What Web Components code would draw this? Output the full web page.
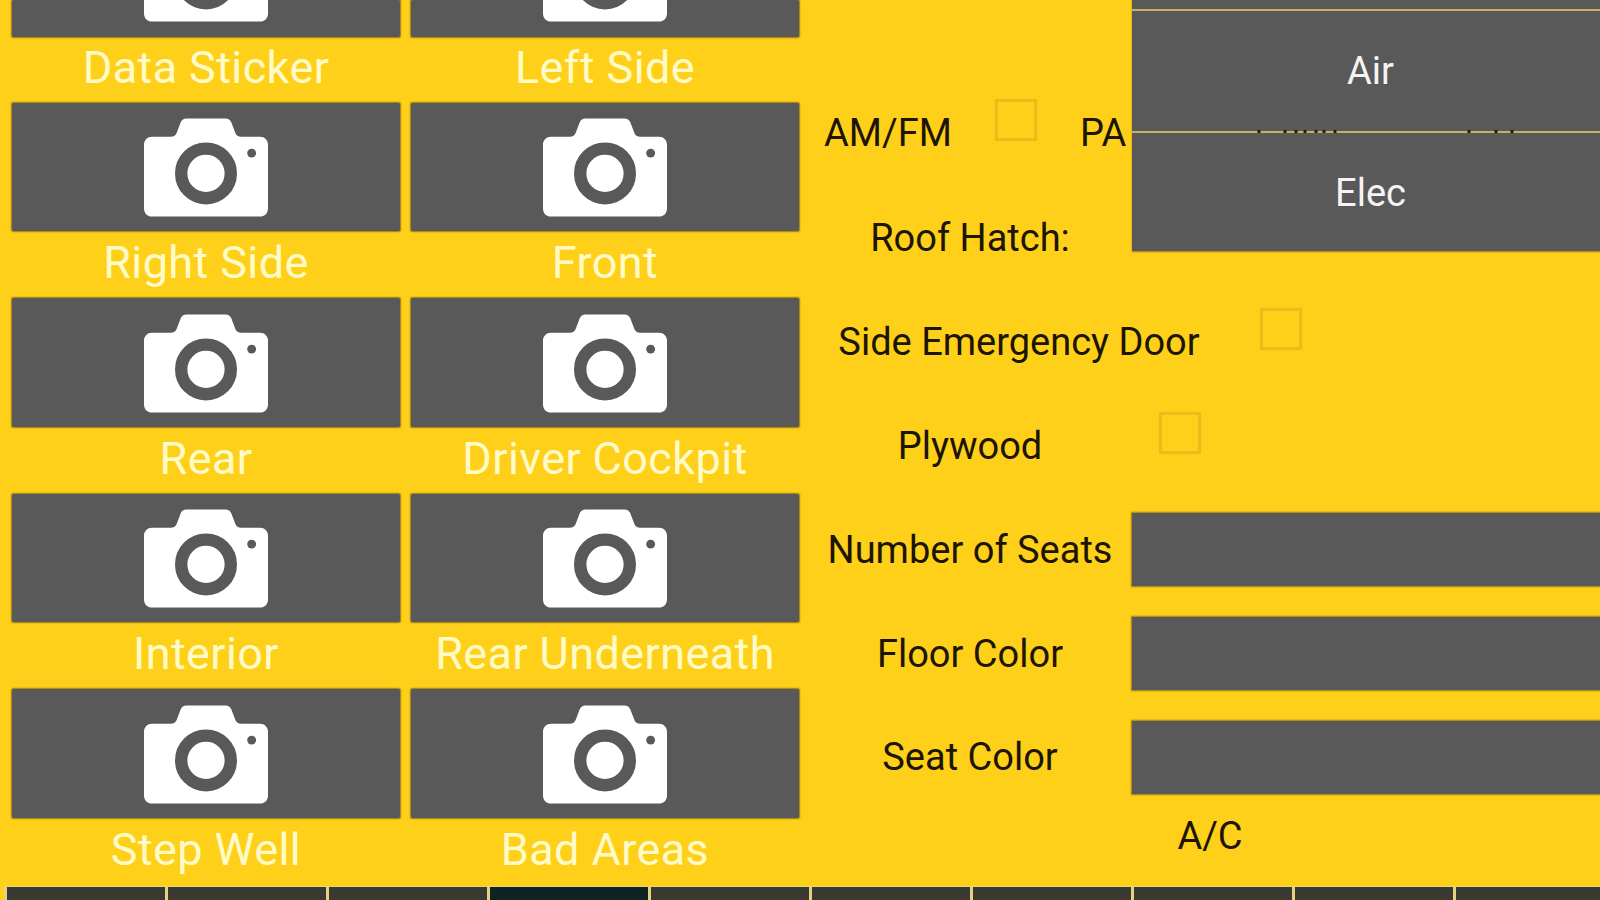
<!DOCTYPE html>
<html><head><meta charset="utf-8"><style>
html,body{margin:0;padding:0;width:1600px;height:900px;overflow:hidden;background:#ffd01a;font-family:Roboto,sans-serif}
</style></head><body>
<app-screen>
  <photo-grid slot="photos">
    <photo-tile cut>Data Sticker</photo-tile><photo-tile cut>Left Side</photo-tile>
    <photo-tile>Right Side</photo-tile><photo-tile>Front</photo-tile>
    <photo-tile>Rear</photo-tile><photo-tile>Driver Cockpit</photo-tile>
    <photo-tile>Interior</photo-tile><photo-tile>Rear Underneath</photo-tile>
    <photo-tile>Step Well</photo-tile><photo-tile>Bad Areas</photo-tile>
  </photo-grid>
  <spec-form slot="form"></spec-form>
  <tab-strip slot="tabs"></tab-strip>
</app-screen>
<script>
function el(tag,css,html){
  customElements.define(tag,class extends HTMLElement{
    constructor(){super();this.attachShadow({mode:'open'}).innerHTML='<style>'+css+'</style>'+html;}
  });
}
el('app-screen',`
:host{display:grid;width:1600px;height:900px;grid-template-columns:820px 780px;grid-template-rows:886px 14px;overflow:hidden;background:#ffd01a}
::slotted([slot=tabs]){grid-column:1 / 3}
`,`<slot name="photos"></slot><slot name="form"></slot><slot name="tabs"></slot>`);
el('photo-grid',`
:host{display:grid;grid-template-columns:388px 388px;column-gap:11px;grid-template-rows:102.5px repeat(4,195.5px);padding-left:12px;align-content:start}
`,`<slot></slot>`);
customElements.define('photo-tile',class extends HTMLElement{
  constructor(){super();const cut=this.hasAttribute('cut');
  this.attachShadow({mode:'open'}).innerHTML=`<style>
  :host{display:flex;flex-direction:column;min-height:0}
  .card{height:${cut?37:128.5}px;flex:none;background:#595959;border-radius:2px;box-shadow:0 0 1.5px .5px rgba(105,85,15,.7);display:flex;justify-content:center;align-items:flex-end;overflow:hidden}
  svg{display:block;width:124px;height:99px;flex:none;margin-bottom:${cut?15.5:14}px}
  .lab{color:#fffbc8;font-size:45px;letter-spacing:.4px;line-height:62px;padding-top:${cut?0:1}px;text-align:center;white-space:nowrap}
  </style>
  <div class="card"><svg viewBox="0 0 125 99"><path fill="#fff" d="M8 18.5H27C30 18.5 32 17 33 14.5L37 4C38 1.5 40 0 43 0H82C85 0 87 1.5 88 4L92 14.5C93 17 95 18.5 98 18.5H117C121.5 18.5 125 22 125 26.5V91C125 95.5 121.5 99 117 99H8C3.5 99 0 95.5 0 91V26.5C0 22 3.5 18.5 8 18.5Z"/><circle cx="62.5" cy="55.5" r="25" fill="none" stroke="#595959" stroke-width="12.5"/><circle cx="108.5" cy="35" r="4.5" fill="#595959"/></svg></div>
  <div class="lab"><slot></slot></div>`;}
});
el('check-box',`:host{display:block;width:42px;height:42px;box-sizing:border-box;border:3px solid #e9bd1c;border-radius:1px;box-shadow:0 0 1px rgba(120,95,10,.3);margin-bottom:26px}`,``);
el('form-label',`:host{display:block;color:#1c1500;font-size:38px;line-height:44px;text-align:center;white-space:nowrap}`,`<slot></slot>`);
el('dark-field',`
:host{display:flex;align-items:center;justify-content:center;background:#595959;color:#f4f4f4;font-size:38px;box-sizing:border-box;padding-bottom:1px}
:host([edged]){height:73px;box-shadow:0 0 1.5px 1px rgba(105,85,15,.7)}
`,`<slot></slot>`);
customElements.define('spec-form',class extends HTMLElement{
  constructor(){super();
  const dots=[1259,1285,1296,1305,1316,1324,1335,1469,1496,1512].map(x=>`<rect x="${x-1132-1.5}" y="0" width="3" height="3" fill="#2a2000"/>`).join('');
  this.attachShadow({mode:'open'}).innerHTML=`<style>
  :host{display:grid;grid-template-columns:312px 477px;grid-template-rows:81px 105.5px repeat(6,103.8px) 54px;align-content:start;min-width:0;overflow:hidden}
  .top{grid-column:2;grid-row:1 / 4;display:grid;grid-template-rows:9px 120px 118px;row-gap:2px;height:251px;background:#c9b064;position:relative;align-self:start;box-shadow:0 1px 1.5px rgba(105,85,15,.7)}
  .dots{position:absolute;left:0;top:130px;width:468px;height:3px;display:block}
  .elec{padding-top:2px;padding-bottom:0}
  .amfm{grid-column:1;grid-row:2;display:grid;grid-template-columns:171px 42px 43px auto;padding-left:4px;padding-bottom:2px;align-items:center}
  .amfm form-label{text-align:left}
  .roof{grid-column:1;grid-row:3;align-self:center;padding-right:12px}
  .row{grid-column:1 / 3;display:grid;align-items:center}
  .side{grid-template-columns:398px 42px;column-gap:42px}
  .ply{grid-template-columns:300px 42px;column-gap:39px}
  .field{grid-column:1 / 3;display:grid;grid-template-columns:300px 477px;column-gap:12px;align-items:center}
  .ac{grid-column:1 / 3;width:780px;align-self:center}
  </style>
  <div class="top">
    <dark-field></dark-field>
    <dark-field>Air</dark-field>
    <dark-field class="elec">Elec</dark-field>
    <svg class="dots" viewBox="0 0 468 3">${dots}</svg>
  </div>
  <div class="amfm"><form-label>AM/FM</form-label><check-box></check-box><span></span><form-label>PA</form-label></div>
  <form-label class="roof">Roof Hatch:</form-label>
  <div class="row side"><form-label>Side Emergency Door</form-label><check-box></check-box></div>
  <div class="row ply"><form-label>Plywood</form-label><check-box></check-box></div>
  <div class="field"><form-label>Number of Seats</form-label><dark-field edged></dark-field></div>
  <div class="field"><form-label>Floor Color</form-label><dark-field edged></dark-field></div>
  <div class="field"><form-label>Seat Color</form-label><dark-field edged></dark-field></div>
  <form-label class="ac">A/C</form-label>`;}
});
customElements.define('tab-strip',class extends HTMLElement{
  constructor(){super();
  let t='';for(let i=0;i<10;i++)t+=`<div class="tab${i==3?' on':''}"></div>`;
  this.attachShadow({mode:'open'}).innerHTML=`<style>
  :host{display:flex;align-items:stretch;padding-left:3.5px;padding-top:1px;overflow:hidden;background:linear-gradient(#e9d680,#e9d680) 4px 0 / 100% 100% no-repeat}
  .tab{flex:none;width:158px;height:13px;background:#3a3a32;border-left:3.3px solid #e6d27e;box-sizing:content-box}
  .tab:first-child{border-left:0}
  .on{background:#102222}
  </style>${t}`;}
});
</script>
</body></html>
